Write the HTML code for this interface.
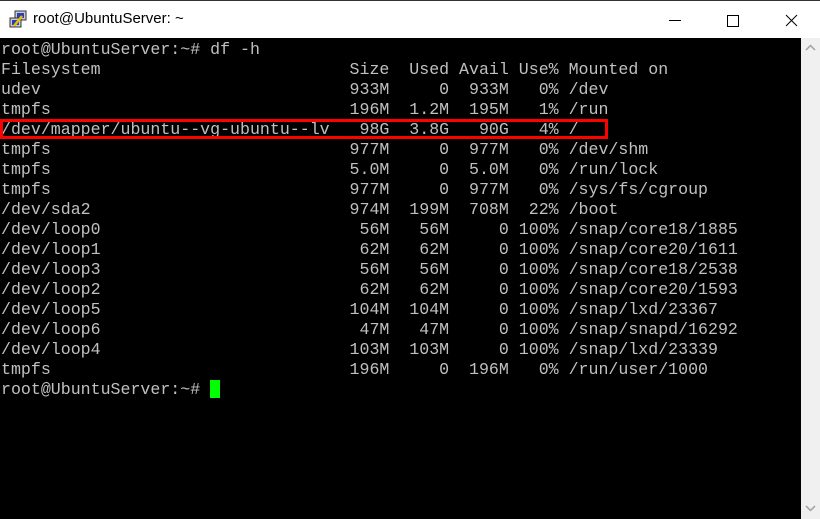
<!DOCTYPE html>
<html><head><style>
body{margin:0;width:820px;height:519px;overflow:hidden;background:#fff;position:relative;font-family:"Liberation Sans",sans-serif}
.title{position:absolute;left:0;top:0;width:820px;height:38px;background:#fff;border-top:1px solid #333;box-sizing:border-box}
.title span{position:absolute;left:33px;top:9px;font-size:15px;color:#000}
.term{position:absolute;left:0;top:38px;width:801px;height:481px;background:#000}
pre{margin:0;position:absolute;left:1px;top:2px;font-family:"Liberation Mono",monospace;font-size:16.6px;line-height:20px;color:#c0c0c0}
.sb{position:absolute;left:801px;top:38px;width:19px;height:481px;background:#f0f0f0}
.box{position:absolute;left:0;top:119px;width:608px;height:20px;border:3px solid #f00;box-sizing:border-box}
.cur{position:absolute;left:210px;top:380px;width:10px;height:18px;background:#0f0}
</style></head><body>
<div class="title">
<svg style="position:absolute;left:8px;top:9px" width="20" height="20" viewBox="0 0 20 20"><rect x="7" y="1" width="11" height="9" fill="#c8c8d8" stroke="#333"/><rect x="9" y="3" width="7" height="5" fill="#2a3fb0"/><rect x="2" y="8" width="11" height="9" fill="#c8c8d8" stroke="#333"/><rect x="4" y="10" width="7" height="5" fill="#2a3fb0"/><path d="M6 16 L14 6" stroke="#e8c000" stroke-width="2.5"/></svg>
<span>root@UbuntuServer: ~</span>
<svg style="position:absolute;left:660px;top:12px" width="150" height="16"><path d="M9 7.5h12" stroke="#000"/><rect x="67.5" y="2.5" width="11" height="11" fill="none" stroke="#000"/><path d="M126 2l11 11M137 2l-11 11" stroke="#000"/></svg>
</div>
<div class="term"><pre>root@UbuntuServer:~# df -h
Filesystem                         Size  Used Avail Use% Mounted on
udev                               933M     0  933M   0% /dev
tmpfs                              196M  1.2M  195M   1% /run
/dev/mapper/ubuntu--vg-ubuntu--lv   98G  3.8G   90G   4% /
tmpfs                              977M     0  977M   0% /dev/shm
tmpfs                              5.0M     0  5.0M   0% /run/lock
tmpfs                              977M     0  977M   0% /sys/fs/cgroup
/dev/sda2                          974M  199M  708M  22% /boot
/dev/loop0                          56M   56M     0 100% /snap/core18/1885
/dev/loop1                          62M   62M     0 100% /snap/core20/1611
/dev/loop3                          56M   56M     0 100% /snap/core18/2538
/dev/loop2                          62M   62M     0 100% /snap/core20/1593
/dev/loop5                         104M  104M     0 100% /snap/lxd/23367
/dev/loop6                          47M   47M     0 100% /snap/snapd/16292
/dev/loop4                         103M  103M     0 100% /snap/lxd/23339
tmpfs                              196M     0  196M   0% /run/user/1000
root@UbuntuServer:~# </pre></div>
<div class="box"></div>
<div class="cur"></div>
<div class="sb">
<svg style="position:absolute;left:4px;top:6px" width="11" height="8"><path d="M1 6l4.5-4.5L10 6" stroke="#a0a0a0" stroke-width="1.5" fill="none"/></svg>
<svg style="position:absolute;left:4px;top:466px" width="11" height="8"><path d="M1 2l4.5 4.5L10 2" stroke="#a0a0a0" stroke-width="1.5" fill="none"/></svg>
</div>
</body></html>
